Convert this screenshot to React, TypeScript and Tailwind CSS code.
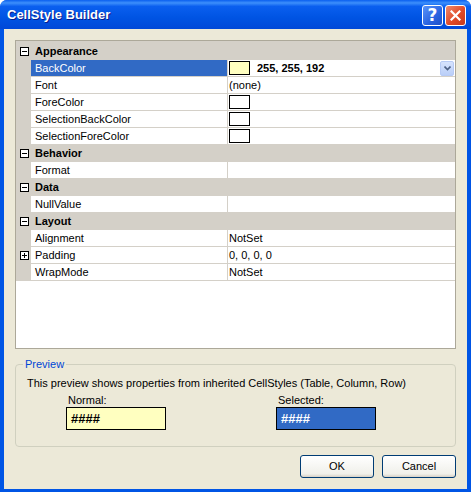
import React from 'react';

type Row =
    | { kind: 'cat'; label: string }
    | { kind: 'item'; name: string; value?: string; swatch?: string; bold?: boolean; expandable?: boolean; selected?: boolean };

const rows: Row[] = [
    { kind: 'cat', label: 'Appearance' },
    { kind: 'item', name: 'BackColor', swatch: '#FFFFC0', value: '255, 255, 192', bold: true, selected: true },
    { kind: 'item', name: 'Font', value: '(none)' },
    { kind: 'item', name: 'ForeColor', swatch: '#FFFFFF' },
    { kind: 'item', name: 'SelectionBackColor', swatch: '#FFFFFF' },
    { kind: 'item', name: 'SelectionForeColor', swatch: '#FFFFFF' },
    { kind: 'cat', label: 'Behavior' },
    { kind: 'item', name: 'Format' },
    { kind: 'cat', label: 'Data' },
    { kind: 'item', name: 'NullValue' },
    { kind: 'cat', label: 'Layout' },
    { kind: 'item', name: 'Alignment', value: 'NotSet' },
    { kind: 'item', name: 'Padding', value: '0, 0, 0, 0', expandable: true },
    { kind: 'item', name: 'WrapMode', value: 'NotSet' },
];

const ToggleBox: React.FC<{ plus?: boolean }> = ({ plus }) => (
    <svg width="9" height="9" viewBox="0 0 9 9" className="block">
        <rect x="0.5" y="0.5" width="8" height="8" fill="#fff" stroke="#000" />
        <line x1="2" y1="4.5" x2="7" y2="4.5" stroke="#000" />
        {plus && <line x1="4.5" y1="2" x2="4.5" y2="7" stroke="#000" />}
    </svg>
);

const DropButton: React.FC = () => (
    <div className="w-[14px] h-[15px] rounded-[2px] border border-[#B7CBF5] bg-[linear-gradient(#D6E3FD,#BACFF8)] flex items-center justify-center">
        <svg width="7" height="5" viewBox="0 0 7 5">
            <path d="M0.5 0.5 L3.5 3.5 L6.5 0.5" fill="none" stroke="#4D6185" strokeWidth="1.6" />
        </svg>
    </div>
);

const GridRow: React.FC<{ row: Row }> = ({ row }) => {
    if (row.kind === 'cat') {
        return (
            <div className="flex h-[17px] bg-[#D4D0C8]">
                <div className="w-[15px] flex items-center justify-center pl-[1px]">
                    <ToggleBox />
                </div>
                <div className="pl-[4px] font-bold leading-[17px]">{row.label}</div>
            </div>
        );
    }
    return (
        <div className="flex h-[17px]">
            <div className="w-[15px] bg-[#D4D0C8] flex items-center justify-center pl-[1px]">
                {row.expandable && <ToggleBox plus />}
            </div>
            <div
                className={`w-[197px] border-b border-r border-[#D4D0C8] pl-[4px] leading-[16px] ${
                    row.selected ? 'bg-[#316AC5] text-white' : 'bg-white'
                }`}
            >
                {row.name}
            </div>
            <div className="flex-1 border-b border-[#D4D0C8] bg-white flex items-center pl-[1px] pr-[1px]">
                {row.swatch && (
                    <div className="w-[21px] h-[14px] border border-black mr-[7px]" style={{ backgroundColor: row.swatch }} />
                )}
                {row.value && <span className={`leading-[16px] ${row.bold ? 'font-bold' : ''}`}>{row.value}</span>}
                {row.selected && (
                    <div className="ml-auto">
                        <DropButton />
                    </div>
                )}
            </div>
        </div>
    );
};

const XpButton: React.FC<{ label: string }> = ({ label }) => (
    <button className="w-[74px] h-[23px] rounded-[3px] border border-[#003C74] bg-[linear-gradient(#FFFFFF,#F0F0EA_85%,#D6D0C5)] text-[11px] text-black">
        {label}
    </button>
);

export default function App() {
    return (
        <div className="w-[471px] h-[492px] bg-[#0055E5] rounded-t-[7px] flex flex-col overflow-hidden font-['Liberation_Sans',Arial,sans-serif] text-[11px] text-black">
            <div className="h-[29px] shrink-0 flex items-center justify-between pl-[7px] pr-[5px] bg-[linear-gradient(#0A5FEF,#3D8FFB_10%,#0A5FEF_22%,#0054E3_60%,#0048D8)]">
                <span className="text-white font-bold text-[13px] [text-shadow:1px_1px_0_#0A1C8C]">
                    CellStyle Builder
                </span>
                <div className="flex gap-[2px] pt-[1px]">
                    <div className="w-[21px] h-[21px] rounded-[3px] border border-white bg-[linear-gradient(135deg,#5A94FA,#2A63E0_60%,#1F50C8)] flex items-center justify-center text-white font-bold text-[17px] leading-none font-['DejaVu_Sans',sans-serif]">
                        ?
                    </div>
                    <div className="w-[21px] h-[21px] rounded-[3px] border border-white bg-[linear-gradient(135deg,#F08A6C,#E04A28_55%,#C43A1C)] flex items-center justify-center">
                        <svg width="11" height="11" viewBox="0 0 11 11">
                            <path d="M1.5 1.5 L9.5 9.5 M9.5 1.5 L1.5 9.5" stroke="#fff" strokeWidth="2.2" strokeLinecap="square" />
                        </svg>
                    </div>
                </div>
            </div>
            <div className="flex-1 ml-[4px] mr-[4px] mb-[3px] bg-[#ECE9D8] pt-[11px] px-[11px] flex flex-col">
                <div className="h-[309px] border border-[#ACA899] bg-white flex flex-col">
                    <div className="h-[2px] bg-[#D4D0C8]" />
                    {rows.map((r, i) => (
                        <GridRow key={i} row={r} />
                    ))}
                </div>
                <fieldset className="mt-[7px] border border-[#D0D0BF] rounded-[4px] h-[91px] pl-[11px]">
                    <legend className="ml-[-4px] px-[2px] text-[#0046D5]">Preview</legend>
                    <div className="leading-[14px] mt-[3px]">
                        This preview shows properties from inherited CellStyles (Table, Column, Row)
                    </div>
                    <div className="flex gap-[110px] ml-[39px] mt-[3px]">
                        <div className="flex flex-col">
                            <span className="pl-[2px] leading-[14px]">Normal:</span>
                            <div className="w-[100px] h-[23px] border border-black bg-[#FFFFC0] font-bold text-[13px] pl-[4px] leading-[21px]">####</div>
                        </div>
                        <div className="flex flex-col">
                            <span className="pl-[2px] leading-[14px]">Selected:</span>
                            <div className="w-[100px] h-[23px] border border-black bg-[#316AC5] text-white font-bold text-[13px] pl-[4px] leading-[21px]">####</div>
                        </div>
                    </div>
                </fieldset>
                <div className="flex justify-end gap-[8px] mt-[8px]">
                    <XpButton label="OK" />
                    <XpButton label="Cancel" />
                </div>
            </div>
        </div>
    );
}
